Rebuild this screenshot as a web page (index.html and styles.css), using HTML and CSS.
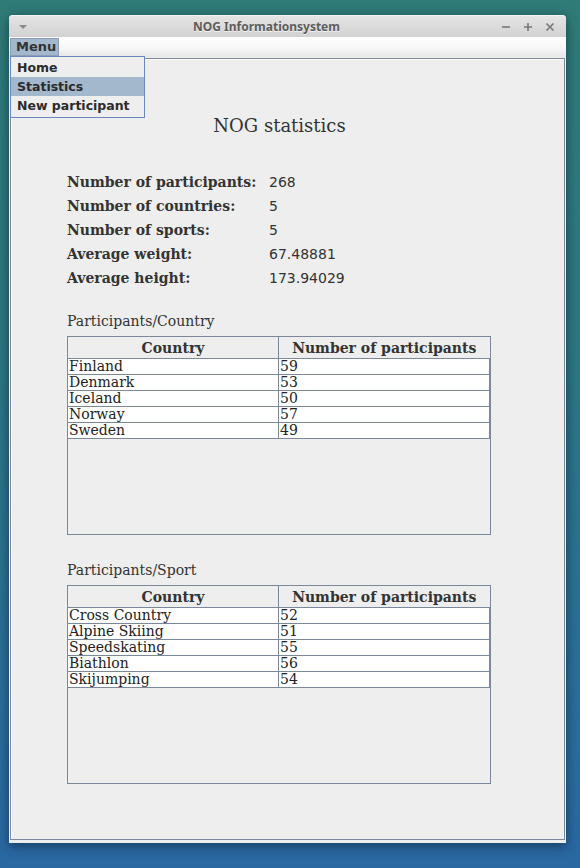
FILE: index.html
```html
<!DOCTYPE html>
<html>
<head>
<meta charset="utf-8">
<link rel="stylesheet" href="styles.css">
</head>
<body>
<div class="window">
  <div class="titlebar">
    <svg class="tb-menu" width="10" height="6" viewBox="0 0 10 6"><path d="M1 1 L9 1 L5 5 Z" fill="#8a8a8a"/></svg>
    <span class="title">NOG Informationsystem</span>
    <div class="tb-buttons">
      <svg width="10" height="10" viewBox="0 0 10 10"><path d="M1 5 H9" stroke="#777" stroke-width="1.6"/></svg>
      <svg width="10" height="10" viewBox="0 0 10 10"><path d="M1 5 H9 M5 1 V9" stroke="#777" stroke-width="1.6"/></svg>
      <svg width="10" height="10" viewBox="0 0 10 10"><path d="M1.5 1.5 L8.5 8.5 M8.5 1.5 L1.5 8.5" stroke="#777" stroke-width="1.6"/></svg>
    </div>
  </div>
  <div class="menubar">
    <div class="menu-btn">Menu</div>
  </div>
  <div class="content">
    <h1 class="heading">NOG statistics</h1>
    <div class="stats">
      <div class="stat-label">Number of participants:</div><div class="stat-value">268</div>
      <div class="stat-label">Number of countries:</div><div class="stat-value">5</div>
      <div class="stat-label">Number of sports:</div><div class="stat-value">5</div>
      <div class="stat-label">Average weight:</div><div class="stat-value">67.48881</div>
      <div class="stat-label">Average height:</div><div class="stat-value">173.94029</div>
    </div>
    <div class="section-label">Participants/Country</div>
    <div class="table-box">
      <table class="grid">
        <thead><tr><th class="c1">Country</th><th class="c2">Number of participants</th></tr></thead>
        <tbody>
          <tr><td>Finland</td><td>59</td></tr>
          <tr><td>Denmark</td><td>53</td></tr>
          <tr><td>Iceland</td><td>50</td></tr>
          <tr><td>Norway</td><td>57</td></tr>
          <tr><td>Sweden</td><td>49</td></tr>
        </tbody>
      </table>
    </div>
    <div class="section-label second">Participants/Sport</div>
    <div class="table-box">
      <table class="grid">
        <thead><tr><th class="c1">Country</th><th class="c2">Number of participants</th></tr></thead>
        <tbody>
          <tr><td>Cross Country</td><td>52</td></tr>
          <tr><td>Alpine Skiing</td><td>51</td></tr>
          <tr><td>Speedskating</td><td>55</td></tr>
          <tr><td>Biathlon</td><td>56</td></tr>
          <tr><td>Skijumping</td><td>54</td></tr>
        </tbody>
      </table>
    </div>
  </div>
  <div class="dropdown">
    <div class="dd-item">Home</div>
    <div class="dd-item selected">Statistics</div>
    <div class="dd-item">New participant</div>
  </div>
</div>
</body>
</html>
```

FILE: styles.css
```css
html, body {
  margin: 0;
  height: 100%;
}
body {
  background: linear-gradient(180deg, #2f7b77 0%, #2d7782 40%, #2a6c9c 85%, #2a68a2 100%);
  overflow: hidden;
}
.window {
  position: relative;
  margin: 15px 0 0 9px;
  width: 557px;
  height: 828px;
  border-radius: 4px 4px 0 0;
  box-shadow: 0 3px 12px rgba(0, 20, 40, 0.55);
  display: flex;
  flex-direction: column;
  background: #eeeeee;
}
.titlebar {
  height: 22px;
  border-radius: 4px 4px 0 0;
  background: linear-gradient(180deg, #e4e4e4 0%, #d2d2d2 100%);
  display: flex;
  align-items: center;
  border-top: 1px solid #f4f4f4;
  box-sizing: border-box;
}
.tb-menu {
  margin-left: 9px;
  width: 10px;
  flex: none;
}
.title {
  flex: 1;
  text-align: center;
  font: bold 12px "Noto Sans", sans-serif;
  color: #5c5c5c;
  text-shadow: 0 1px 0 #f2f2f2;
  padding-left: 4px;
}
.tb-buttons {
  margin-right: 11px;
  display: flex;
  gap: 12px;
  flex: none;
}
.menubar {
  height: 20px;
  background: linear-gradient(180deg, #ffffff 0%, #f6f6f6 60%, #e6e6e6 100%);
  padding-left: 1px;
  box-sizing: border-box;
  display: flex;
  align-items: stretch;
}
.menu-btn {
  width: 49px;
  margin-top: 1px;
  margin-bottom: 1px;
  box-sizing: border-box;
  background: #a3b8cc;
  border: 1px solid #8a9db3;
  font: bold 13px "DejaVu Sans", sans-serif;
  color: #333;
  padding-left: 5px;
  line-height: 16px;
}
.content {
  flex: 1;
  margin: 1px 1px 3px 1px;
  border: 1px solid #7a8899;
  box-shadow: inset 1px 1px 0 #fff;
  background: #eeeeee;
  padding-left: 56px;
  box-sizing: border-box;
  font-family: "DejaVu Serif", serif;
  color: #333;
}
.heading {
  margin: 55px 0 0 -56px;
  padding-right: 16px;
  text-align: center;
  font: normal 18px "DejaVu Serif", serif;
  color: #333;
  line-height: 24px;
}
.stats {
  margin-top: 32px;
  display: grid;
  grid-template-columns: 202px auto;
  grid-auto-rows: 24px;
  align-items: center;
}
.stat-label {
  font: bold 14px "DejaVu Serif", serif;
  color: #333;
}
.stat-value {
  font: 14px "DejaVu Sans", sans-serif;
  color: #333;
}
.section-label {
  margin-top: 22px;
  font: 14px "DejaVu Serif", serif;
  line-height: 18px;
  color: #333;
}
.section-label.second {
  margin-top: 26px;
}
.table-box {
  margin-top: 6px;
  width: 424px;
  height: 199px;
  box-sizing: border-box;
  border: 1px solid #7a8899;
  background: #eeeeee;
}
.grid {
  border-collapse: collapse;
  width: 422px;
  table-layout: fixed;
}
.grid th {
  height: 21px;
  padding: 0;
  font: bold 14px "DejaVu Serif", serif;
  color: #333;
  background: #eeeeee;
  border-right: 1px solid #7a8899;
  border-bottom: 1px solid #7a8899;
  text-align: center;
}
.grid th.c1 { width: 210px; }
.grid th.c2 { border-right: none; }
.grid td {
  height: 15px;
  padding: 0 0 0 1px;
  font: 14px "DejaVu Serif", serif;
  line-height: 15px;
  color: #222;
  background: #fff;
  border-right: 1px solid #7a8899;
  border-bottom: 1px solid #7a8899;
  white-space: nowrap;
  overflow: hidden;
}
.dropdown {
  position: absolute;
  left: 1px;
  top: 41px;
  width: 135px;
  height: 62px;
  box-sizing: border-box;
  border: 1px solid #6c87bd;
  background: #eeeeee;
  font: bold 12.5px "DejaVu Sans", sans-serif;
  color: #2b2b2b;
  padding-top: 1px;
}
.dd-item {
  height: 19px;
  line-height: 19px;
  padding-left: 6px;
}
.dd-item.selected {
  background: #a3b8cc;
}
```
